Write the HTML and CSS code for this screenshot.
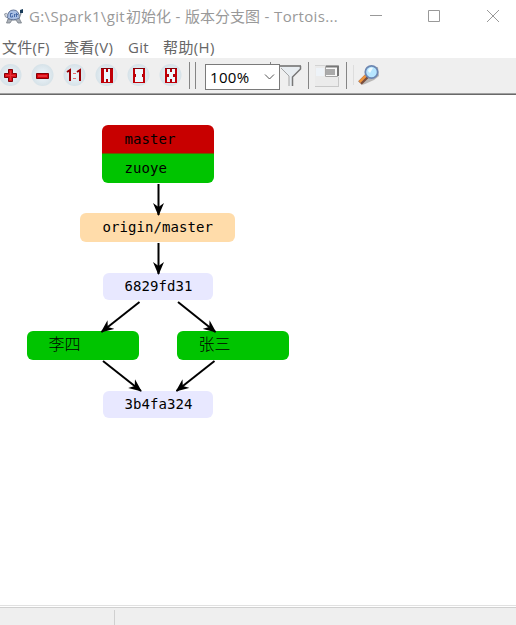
FILE: index.html
```html
<!DOCTYPE html>
<html lang="zh-CN">
<head>
<meta charset="utf-8">
<title>版本分支图</title>
<link rel="stylesheet" href="styles.css">
</head>
<body>
<div class="window">
  <header class="titlebar">
    <svg class="app-icon" width="20" height="18" viewBox="0 0 20 18">
      <path d="M4 11 2.500 15H6L8 12H12L14 15H17.500L15 10Z" fill="#aab0b8" stroke="#777d87" stroke-width=".8"/>
      <path d="M.5 6Q2 4 4.500 7V10L1.500 9Z" fill="#d5d9df" stroke="#858d9a" stroke-width=".8"/>
      <path d="M3.500 10Q3.500 2 9.500 2Q15 2 15.500 10Q9 13.500 3.500 10Z" fill="#a9bfe4" stroke="#667799"/>
      <path d="M8.500 5.500H6.500V9H8.500V7.500M10.500 6V9M12.500 5V9M11.500 6.500H14" fill="none" stroke="#486aa8"/>
      <path d="M15.500 9 17 5" stroke="#8e98a4" stroke-width="1.500"/>
      <path d="M16 2 19 1V5L16 5Z" fill="#193c59"/>
    </svg>
    <h1 class="title"><span class="path">G:\Spark1\git</span><span>初始化</span><span class="dash">-</span><span>版本分支图</span><span class="dash">-</span><span class="product">Tortois...</span></h1>
    <div class="controls">
      <svg width="14" height="14" viewBox="0 0 14 14"><path d="M1 6.5H13"/></svg>
      <svg width="14" height="14" viewBox="0 0 14 14"><path d="M1.5 1.5H12.5V12.5H1.5Z"/></svg>
      <svg width="14" height="14" viewBox="0 0 14 14"><path d="M1 1 13 13M13 1 1 13"/></svg>
    </div>
  </header>
  <nav class="menubar">
    <span class="m-file">文件(F)</span><span class="m-view">查看(V)</span><span class="m-git">Git</span><span class="m-help">帮助(H)</span>
  </nav>
  <div class="toolbar">
    <svg class="defs" width="0" height="0">
      <defs>
        <radialGradient id="disc"><stop offset="0" stop-color="#f0f7fc"/><stop offset=".65" stop-color="#dfe9ef"/><stop offset="1" stop-color="#d6e2e8"/></radialGradient>
      </defs>
    </svg>
    <div class="tools">
      <svg width="32" height="35" viewBox="0 0 32 35"><circle cx="16.5" cy="17" r="11" fill="url(#disc)"/><path d="M14.5 11.5H18.5V15.5H22.5V19.5H18.5V23.5H14.5V19.5H10.5V15.5H14.5Z" fill="#dc1018" stroke="#850006"/><path d="M16.5 13V22M12 17.5H21" stroke="#e23339"/></svg>
      <svg width="32" height="35" viewBox="0 0 32 35"><circle cx="16.5" cy="17" r="11" fill="url(#disc)"/><path d="M10.5 15.5H22.5V20.5H10.5Z" fill="#d9000a" stroke="#850006"/><path d="M12 18H21" stroke="#e23339" stroke-width="2"/></svg>
      <svg width="32" height="35" viewBox="0 0 32 35"><circle cx="16.5" cy="17" r="11" fill="url(#disc)"/><path d="M9 14 12 12V23M19 14 22 12V23" fill="none" stroke="#980005" stroke-width="2"/><path d="M15 15.5H18M15 20.5H18" stroke="#e46b6e"/></svg>
      <svg width="32" height="35" viewBox="0 0 32 35"><circle cx="16.5" cy="17" r="11" fill="url(#disc)"/><path d="M11 10H23V25H11Z" fill="#c00008"/><path d="M14 11H20V24H14Z" fill="#eef7fc"/><path d="M16 11H18V14H16ZM16 24H18V21H16Z" fill="#b3000a"/><path d="M11 10.5H23" stroke="#850006"/></svg>
      <svg width="32" height="35" viewBox="0 0 32 35"><circle cx="16.5" cy="17" r="11" fill="url(#disc)"/><path d="M11 10H23V25H11Z" fill="#c00008"/><path d="M13 11H21V24H13Z" fill="#eef7fc"/><path d="M13 16H14V19H13ZM21 16H20V19H21Z" fill="#b3000a"/><path d="M11 10.5H23" stroke="#850006"/></svg>
      <svg width="32" height="35" viewBox="0 0 32 35"><circle cx="16.5" cy="17" r="11" fill="url(#disc)"/><path d="M11 10H23V25H11Z" fill="#c00008"/><path d="M13 11H21V24H13Z" fill="#eef7fc"/><path d="M16 11H18V14H16ZM16 24H18V21H16ZM13 16H15V19H13ZM21 16H19V19H21Z" fill="#b3000a"/><path d="M11 10.5H23" stroke="#850006"/></svg>
    </div>
    <i class="sep s1"></i><i class="sep s2"></i>
    <div class="zoom"><span>100%</span><svg width="11" height="8" viewBox="0 0 11 8"><path d="M1 1.5 5.5 6 10 1.5"/></svg></div>
    <svg class="filter" width="22" height="24" viewBox="0 0 22 24"><path d="M1 2H21V5L13 13V22H9V13L1 5Z" fill="#e8edf1"/><path d="M1 4 9 12V22" fill="none" stroke="#a4a4a4"/><path d="M0 2H21" stroke="#8c8c8c" stroke-width="2"/><path d="M20.5 2V5L12.5 13V22" fill="none" stroke="#777" stroke-width="1.5"/></svg>
    <i class="sep s3"></i>
    <svg class="overview" width="26" height="24" viewBox="0 0 26 24"><path d="M1 2H25V23H1Z" fill="#ebebeb"/><path d="M1 22.5H25" stroke="#c8c8c8"/><path d="M24.5 13V23" stroke="#c8c8c8"/><path d="M1 1.5H24" stroke="#d4d4d4"/><path d="M2 4H10V12H2Z" fill="#eef3f8"/><path d="M11.5 2.5H23.5V12.5H11.5Z" fill="#f8f8f8" stroke="#a4a4a4"/><path d="M12 5H21V11H12Z" fill="#aaa"/><path d="M12 2.5H24V12" fill="none" stroke="#777" stroke-width="2"/></svg>
    <i class="sep s4"></i><i class="faint"></i>
    <svg class="search" width="22" height="22" viewBox="0 0 22 22"><path d="M12 3H20L21 12 16 16 7 20 4 21Z" fill="#b9b7b5"/><path d="M2 19 9 12" stroke="#784d3d" stroke-width="5"/><path d="M1.5 18 8 11.5" stroke="#ef963f" stroke-width="2.5"/><circle cx="13.5" cy="8" r="6.2" fill="#b7e6ff" stroke="#6d87b2" stroke-width="1.8"/><path d="M10 7Q11 3 15 4L12 9Z" fill="#effbff"/></svg>
  </div>
  <main class="canvas">
    <svg class="edges" width="516" height="510" viewBox="0 95 516 510">
      <defs><marker id="arrow" viewBox="0 0 13 12" refX="12" refY="6" markerWidth="13" markerHeight="12" markerUnits="userSpaceOnUse" orient="auto"><path d="M0 .5 13 6 0 11.5 4 6Z"/></marker></defs>
      <path class="edge" d="M158.500 184V215"/><path class="edge" d="M158.500 243V274"/>
      <path class="edge" d="M139.500 302 101.500 332"/><path class="edge" d="M178 302 215.500 332"/>
      <path class="edge" d="M103 361 141 391"/><path class="edge" d="M214.500 361 176.500 391"/>
    </svg>
    <div class="node head">master</div>
    <div class="node branch">zuoye</div>
    <div class="node remote">origin/master</div>
    <div class="node commit c1">6829fd31</div>
    <div class="node local left">李四</div>
    <div class="node local right">张三</div>
    <div class="node commit c2">3b4fa324</div>
  </main>
  <footer class="statusbar"><i></i></footer>
</div>
</body>
</html>
```
FILE: styles.css
```css
* { box-sizing: border-box; }
body { margin: 0; background: #fff; overflow: hidden; }
svg { display: block; flex: none; }
.window { width: 516px; height: 625px; display: flex; flex-direction: column; font-family: "Open Sans", "Noto Sans CJK SC", sans-serif; }
.titlebar { height: 34px; display: flex; align-items: flex-start; }
.app-icon { margin: 8px 0 0 4px; }
.title { margin: 4px 0 0 5px; width: 320px; height: 24px; font-size: 15px; line-height: 24px; font-weight: 400; color: #999; white-space: nowrap; display: flex; }
.path { width: 97px; letter-spacing: .35px; }
.dash { width: 14px; text-align: center; }
.product { letter-spacing: .35px; }
.controls { display: flex; gap: 44px; margin: 9px 0 0 20px; }
.controls svg:last-child { margin-left: 1px; }
.controls svg { fill: none; stroke: #999; }
.menubar { height: 24px; display: flex; padding-left: 2px; font-size: 15px; line-height: 27px; color: #666; white-space: nowrap; }
.m-file { width: 62px; letter-spacing: .2px; }
.m-view { width: 64px; letter-spacing: .3px; }
.m-git { width: 35px; letter-spacing: .3px; }
.m-help { letter-spacing: .4px; }
.toolbar { height: 37px; flex: none; display: flex; background: #efefef; border-bottom: 1px solid #696969; box-shadow: inset 0 -1px #a0a0a0; }
.defs { position: absolute; }
.tools { display: flex; margin-left: -6px; width: 192px; flex: none; }
.sep { width: 1px; height: 27px; margin-top: 4px; background: #858585; flex: none; }
.s1 { margin-left: 3px; }
.s2 { margin-left: 5px; }
.zoom { position: relative; width: 75px; height: 26px; margin: 6px 0 0 9px; border: 1px solid #7a7a7a; background: #fff; color: #000; font-size: 15px; line-height: 25px; padding: 0 4px; display: flex; justify-content: space-between; align-items: center; flex: none; letter-spacing: .3px; }
.zoom::before { content: ""; position: absolute; left: 64px; top: -3px; width: 1px; height: 2px; background: #858585; }
.zoom svg { fill: none; stroke: #555; }
.filter { margin: 6px 0 0 0; }
.s3 { margin-left: 6px; }
.overview { margin: 6px 0 0 5px; }
.s4 { margin-left: 6px; }
.faint { width: 1px; height: 20px; margin: 7px 0 0 6px; background: #ddd; }
.search { margin: 6px 0 0 4px; }
.canvas { position: relative; height: 510px; flex: none; }
.edges { position: absolute; left: 0; top: 0; z-index: 2; }
.edge { stroke: #000; stroke-width: 2; fill: none; marker-end: url(#arrow); }
.node { position: absolute; border-radius: 6px; font-family: "DejaVu Sans Mono", "Noto Sans CJK SC", monospace; font-size: 14px; letter-spacing: .07px; line-height: 28px; color: #000; padding-left: 22.5px; white-space: nowrap; }
.head { left: 102px; top: 30px; width: 112px; height: 29px; background: #c80000; border-radius: 6px 6px 0 0; }
.branch { left: 102px; top: 58px; width: 112px; height: 30px; background: #00c400; border-top: 1px solid #645f00; border-radius: 0 0 6px 6px; }
.remote { left: 80px; top: 118px; width: 155px; height: 29px; background: #ffdcaa; }
.commit { left: 103px; width: 110px; height: 27px; background: #e8e8ff; line-height: 26px; padding-left: 21.5px; }
.c1 { top: 178px; }
.c2 { top: 296px; }
.local { top: 236px; width: 112px; height: 29px; background: #00c400; font-size: 16px; font-weight: 300; line-height: 27px; padding-left: 21.5px; }
.left { left: 27px; }
.right { left: 177px; }
.statusbar { height: 20px; background: #efefef; border-top: 1px solid #e1e1e1; box-shadow: inset 0 1px #fff, inset 0 2px #d0d0d0; padding: 4px 0 0 114px; }
.statusbar i { display: block; width: 1px; height: 16px; background: #d0d0d0; }
```
